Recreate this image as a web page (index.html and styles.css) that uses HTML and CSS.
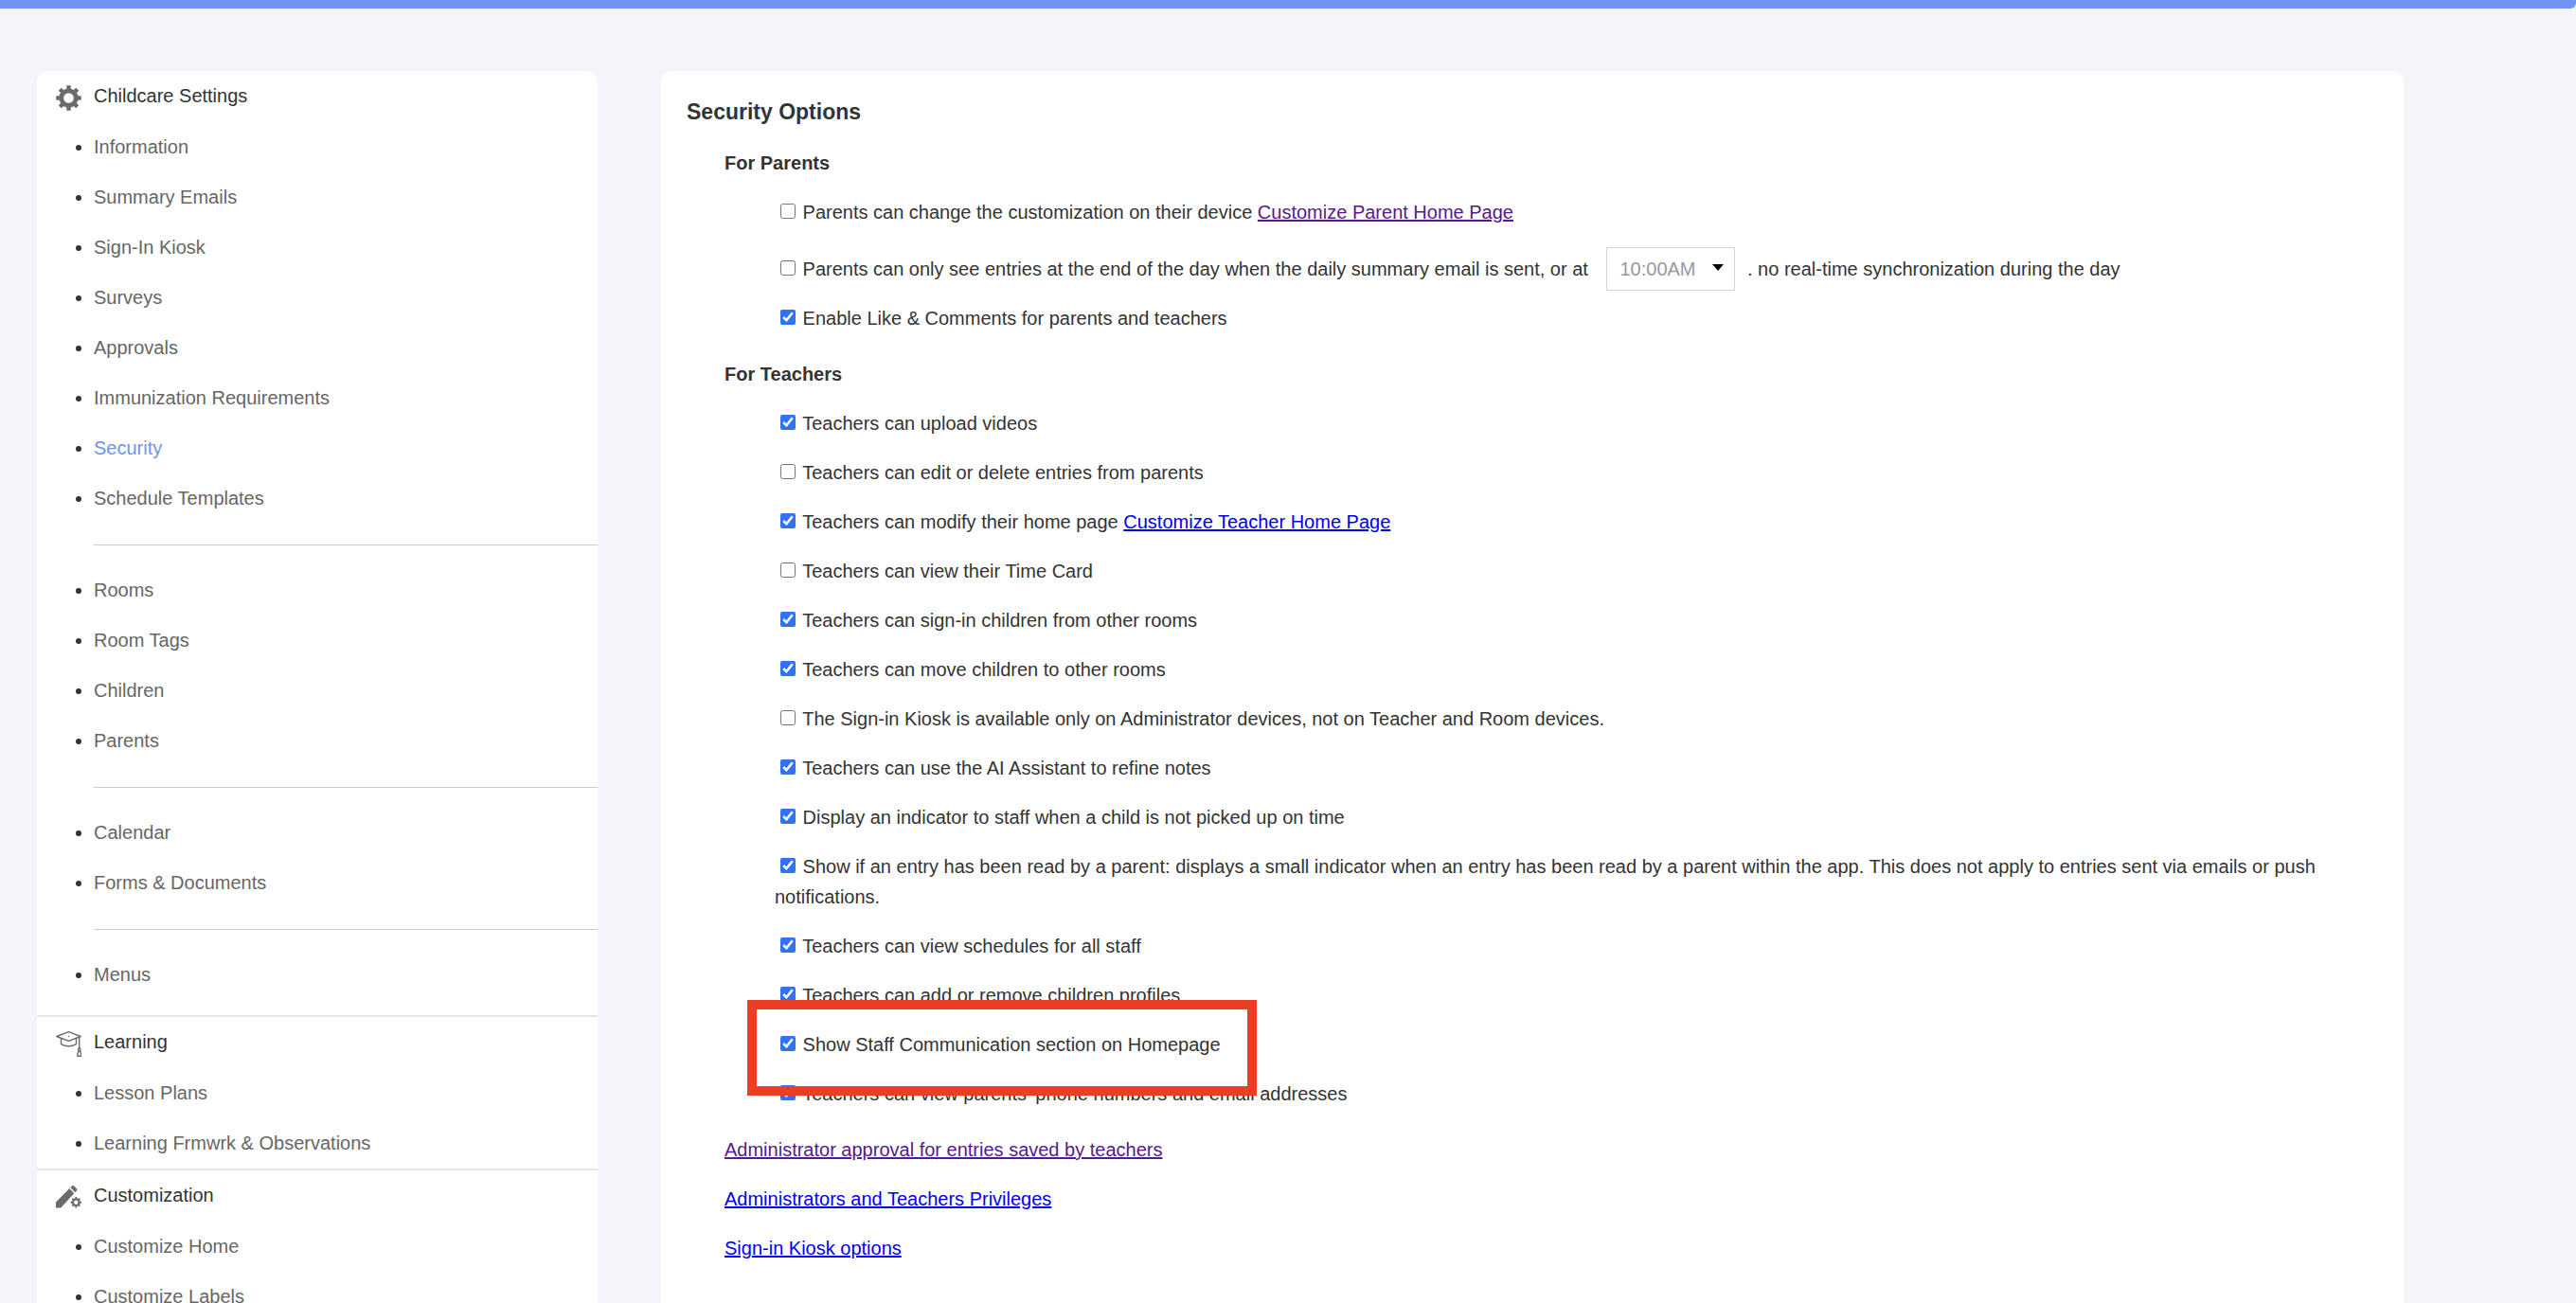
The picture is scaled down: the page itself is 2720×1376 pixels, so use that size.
FILE: index.html
```
<!DOCTYPE html>
<html lang="en">
<head>
	<meta charset="utf-8">
	<title>Security Options</title>
	<link rel="stylesheet" href="styles.css">
</head>

<body>
	<div class="page">
		<div class="topbar"></div>

		<div class="content">
			<nav class="sidebar">
				<div class="menu_section">
					<h2 class="menu_title">
						<svg class="menu_icon" viewBox="0 0 27 27">
							<circle cx="13.5" cy="13.5" r="7.700" fill="none" stroke="#6b6b6b" stroke-width="4.800"/>
							<g stroke="#6b6b6b" stroke-width="4.400">
								<path d="M13.500.3v5M13.500 21.700v5M.3 13.500h5M21.700 13.500h5"/>
								<path d="m4.300 4.300 3.500 3.500M19.200 19.200l3.500 3.500M22.700 4.300l-3.500 3.500M7.800 19.200l-3.500 3.500"/>
							</g>
						</svg>
						Childcare Settings
					</h2>
					<ul class="menu_list">
						<li><a href="#">Information</a></li>
						<li><a href="#">Summary Emails</a></li>
						<li><a href="#">Sign-In Kiosk</a></li>
						<li><a href="#">Surveys</a></li>
						<li><a href="#">Approvals</a></li>
						<li><a href="#">Immunization Requirements</a></li>
						<li><a href="#" class="active">Security</a></li>
						<li><a href="#">Schedule Templates</a></li>
					</ul>
					<hr class="menu_line">
					<ul class="menu_list">
						<li><a href="#">Rooms</a></li>
						<li><a href="#">Room Tags</a></li>
						<li><a href="#">Children</a></li>
						<li><a href="#">Parents</a></li>
					</ul>
					<hr class="menu_line">
					<ul class="menu_list">
						<li><a href="#">Calendar</a></li>
						<li><a href="#">Forms &amp; Documents</a></li>
					</ul>
					<hr class="menu_line">
					<ul class="menu_list menu_list_last">
						<li><a href="#">Menus</a></li>
					</ul>
				</div>

				<div class="menu_section">
					<h2 class="menu_title">
						<svg class="menu_icon" viewBox="0 0 27 27">
							<g fill="none" stroke="#6b6b6b" stroke-width="1.4" stroke-linejoin="round">
								<path d="M.8 5.500 13.500.7l12.700 4.800-12.700 4.900z"/>
								<path d="M5.500 7.600v5.900c3.500 2.900 12.500 2.900 16 0V7.600"/>
								<path d="M24.700 6.200V18"/>
								<path d="M24.700 18c-1.500 0-1.500 2.500-.5 3-1 1-1.500 3-1.500 5.300h4c0-2.300-.5-4.300-1.500-5.300 1-.5 1-3-.5-3z"/>
							</g>
							<circle cx="13.500" cy="5.500" r=".8" fill="#6b6b6b"/>
						</svg>
						Learning
					</h2>
					<ul class="menu_list">
						<li><a href="#">Lesson Plans</a></li>
						<li><a href="#">Learning Frmwrk &amp; Observations</a></li>
					</ul>
				</div>

				<div class="menu_section">
					<h2 class="menu_title">
						<svg class="menu_icon" viewBox="0 0 27 27">
							<g fill="#6b6b6b">
								<path d="M0 18.500 14.300 4l5 5.200L5.200 24.500H0z"/>
								<path d="m15.400 3 1.400-1.400c.7-.7 1.700-.7 2.400 0l2.600 2.700c.7.7.7 1.700 0 2.400l-1.400 1.500z"/>
							</g>
							<circle cx="21.300" cy="18.700" r="3.300" fill="none" stroke="#6b6b6b" stroke-width="2.200"/>
							<g stroke="#6b6b6b" stroke-width="1.900">
								<path d="M21.300 13v2M21.300 22.400v2M15.600 18.700h2M25 18.700h2"/>
								<path d="m17.300 14.700 1.500 1.500M23.800 21.200l1.500 1.500M25.300 14.700l-1.500 1.500M18.800 21.200l-1.500 1.500"/>
							</g>
						</svg>
						Customization
					</h2>
					<ul class="menu_list">
						<li><a href="#">Customize Home</a></li>
						<li><a href="#">Customize Labels</a></li>
					</ul>
				</div>
			</nav>

			<main class="panel">
				<h1>Security Options</h1>

				<form class="options">
					<h3>For Parents</h3>
					<div class="option_list">
						<p>
							<input type="checkbox" id="parentCustom">
							<label for="parentCustom">Parents can change the customization on their device</label>
							<a href="#" class="visited">Customize Parent Home Page</a>
						</p>
						<p class="with_select">
							<input type="checkbox" id="endOfDay">
							<label for="endOfDay">Parents can only see entries at the end of the day when the daily summary email is sent, or at</label>
							<span class="select_box"><select aria-label="Time">
								<option>10:00AM</option>
							</select></span>
							. no real-time synchronization during the day
						</p>
						<p>
							<input type="checkbox" id="likes" checked>
							<label for="likes">Enable Like &amp; Comments for parents and teachers</label>
						</p>
					</div>

					<h3>For Teachers</h3>
					<div class="option_list">
						<p>
							<input type="checkbox" id="videos" checked>
							<label for="videos">Teachers can upload videos</label>
						</p>
						<p>
							<input type="checkbox" id="editEntries">
							<label for="editEntries">Teachers can edit or delete entries from parents</label>
						</p>
						<p>
							<input type="checkbox" id="teacherHome" checked>
							<label for="teacherHome">Teachers can modify their home page</label>
							<a href="#">Customize Teacher Home Page</a>
						</p>
						<p>
							<input type="checkbox" id="timeCard">
							<label for="timeCard">Teachers can view their Time Card</label>
						</p>
						<p>
							<input type="checkbox" id="signInOther" checked>
							<label for="signInOther">Teachers can sign-in children from other rooms</label>
						</p>
						<p>
							<input type="checkbox" id="moveChildren" checked>
							<label for="moveChildren">Teachers can move children to other rooms</label>
						</p>
						<p>
							<input type="checkbox" id="kioskAdmin">
							<label for="kioskAdmin">The Sign-in Kiosk is available only on Administrator devices, not on Teacher and Room devices.</label>
						</p>
						<p>
							<input type="checkbox" id="aiAssistant" checked>
							<label for="aiAssistant">Teachers can use the AI Assistant to refine notes</label>
						</p>
						<p>
							<input type="checkbox" id="pickedUp" checked>
							<label for="pickedUp">Display an indicator to staff when a child is not picked up on time</label>
						</p>
						<p>
							<input type="checkbox" id="entryRead" checked>
							<label for="entryRead">Show if an entry has been read by a parent: displays a small indicator when an entry has been read by a parent within the app. This does not apply to entries sent via emails or push notifications.</label>
						</p>
						<p>
							<input type="checkbox" id="schedules" checked>
							<label for="schedules">Teachers can view schedules for all staff</label>
						</p>
						<p>
							<input type="checkbox" id="profiles" checked>
							<label for="profiles">Teachers can add or remove children profiles</label>
						</p>
						<p class="highlight">
							<input type="checkbox" id="staffComm" checked>
							<label for="staffComm">Show Staff Communication section on Homepage</label>
						</p>
						<p>
							<input type="checkbox" id="phones" checked>
							<label for="phones">Teachers can view parents' phone numbers and email addresses</label>
						</p>
					</div>

					<p><a href="#" class="visited">Administrator approval for entries saved by teachers</a></p>
					<p><a href="#">Administrators and Teachers Privileges</a></p>
					<p><a href="#">Sign-in Kiosk options</a></p>
				</form>
			</main>
		</div>
	</div>
</body>
</html>
```

FILE: styles.css
```
body {
	margin: 0;
	font-family: "Liberation Sans", Arial, Helvetica, sans-serif;
	font-size: 20px;
	line-height: 32px;
	color: #333333;
	background-color: #f4f5fb;
}

.page {
	height: 100vh;
	overflow: hidden;
}

.topbar {
	height: 9px;
	background-color: #6f93ee;
	border-bottom-right-radius: 6px;
}

.content {
	display: flex;
	gap: 67px;
	padding: 66px 182px 0 39px;
}

/* left menu */

.sidebar {
	flex: none;
	width: 592px;
	background-color: #ffffff;
	border-radius: 12px;
	line-height: 53px;
}

.menu_section + .menu_section {
	border-top: 2px solid #e5e5e5;
}

.menu_title {
	display: flex;
	align-items: center;
	gap: 13px;
	margin: 0 0 1px;
	padding-left: 20px;
	font-size: 20px;
	font-weight: normal;
}

.menu_icon {
	width: 27px;
	height: 27px;
	margin-top: 3px;
}

.menu_list {
	margin: 0;
	padding-left: 60px;
}

.menu_list_last {
	padding-bottom: 16px;
}

.menu_list a {
	color: #666666;
	text-decoration: none;
}

.menu_list a.active {
	color: #6f93ee;
}

.menu_line {
	margin: 22px 0 21px 60px;
	border: 0;
	border-top: 1px solid #cccccc;
}

/* right panel */

.panel {
	flex: 1;
	padding: 27px;
	background-color: #ffffff;
	border-radius: 12px;
}

.panel h1 {
	margin: 0 0 22px;
	font-size: 23px;
}

.options {
	padding-left: 40px;
}

.options h3 {
	margin: 0 0 20px;
	font-size: 20px;
}

.options p {
	margin: 0 0 20px;
}

.options a {
	color: #0000ee;
}

.options a.visited {
	color: #551a8b;
}

.option_list {
	padding-left: 53px;
	margin-bottom: 27px;
}

.option_list p:last-child {
	margin-bottom: 0;
}

.option_list input {
	width: 16px;
	height: 16px;
	margin: 0 2px 2px 6px;
	accent-color: #2f72f5;
}

.options .with_select {
	margin-top: 28px;
}

.select_box {
	display: inline-block;
	position: relative;
	margin: -7px 7px -7px 14px;
}

.select_box select {
	appearance: none;
	width: 136px;
	height: 46px;
	padding: 0 13px;
	font-family: inherit;
	font-size: 20px;
	color: #999999;
	background-color: #ffffff;
	border: 1px solid #d5d5d5;
	border-radius: 0;
}

.select_box::after {
	content: "";
	position: absolute;
	top: 18px;
	right: 12px;
	border: 6px solid transparent;
	border-top: 7px solid #000000;
	border-bottom: 0;
	pointer-events: none;
}

.highlight {
	position: relative;
}

.highlight::after {
	content: "";
	position: absolute;
	top: -31px;
	left: -29px;
	width: 518px;
	height: 81px;
	border: 10px solid #ea3f25;
	pointer-events: none;
}
```
